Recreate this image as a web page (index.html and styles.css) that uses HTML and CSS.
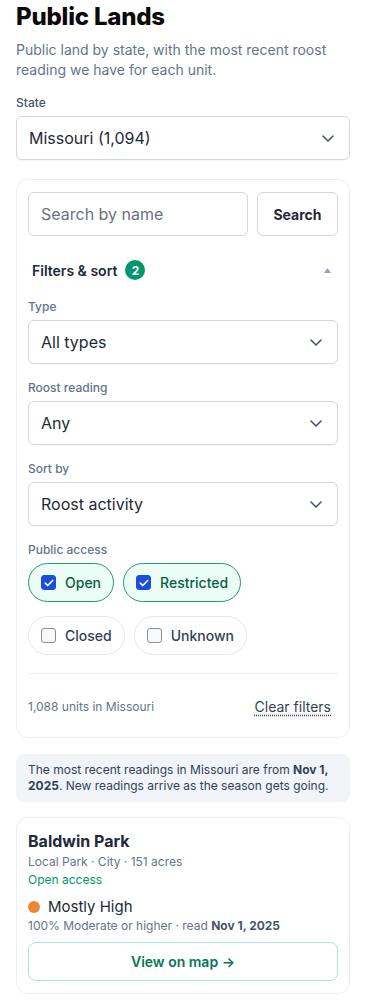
FILE: index.html
```html
<!DOCTYPE html>
<html lang="en">
<head>
<meta charset="utf-8">
<title>Public Lands</title>
<link rel="stylesheet" href="styles.css">
</head>
<body>
<main class="page">
  <h1 class="title">Public Lands</h1>
  <p class="subtitle">Public land by state, with the most recent roost reading we have for each unit.</p>

  <label class="label label-state">State</label>
  <div class="select">
    <span>Missouri (1,094)</span>
    <svg class="chev" width="12" height="7" viewBox="0 0 12 7"><path d="M1 1l5 5 5-5" fill="none" stroke="#475569" stroke-width="1.6" stroke-linecap="round" stroke-linejoin="round"/></svg>
  </div>

  <section class="filters">
    <div class="search-row">
      <div class="search-input">Search by name</div>
      <button class="search-btn">Search</button>
    </div>

    <div class="fs-row">
      <span class="fs-title">Filters &amp; sort</span>
      <span class="badge">2</span>
      <svg class="caret" width="7" height="5" viewBox="0 0 7 5"><path d="M3.5 0L7 5H0z" fill="#94a3b8"/></svg>
    </div>

    <label class="label">Type</label>
    <div class="select">
      <span>All types</span>
      <svg class="chev" width="12" height="7" viewBox="0 0 12 7"><path d="M1 1l5 5 5-5" fill="none" stroke="#475569" stroke-width="1.6" stroke-linecap="round" stroke-linejoin="round"/></svg>
    </div>

    <label class="label">Roost reading</label>
    <div class="select">
      <span>Any</span>
      <svg class="chev" width="12" height="7" viewBox="0 0 12 7"><path d="M1 1l5 5 5-5" fill="none" stroke="#475569" stroke-width="1.6" stroke-linecap="round" stroke-linejoin="round"/></svg>
    </div>

    <label class="label">Sort by</label>
    <div class="select">
      <span>Roost activity</span>
      <svg class="chev" width="12" height="7" viewBox="0 0 12 7"><path d="M1 1l5 5 5-5" fill="none" stroke="#475569" stroke-width="1.6" stroke-linecap="round" stroke-linejoin="round"/></svg>
    </div>

    <label class="label">Public access</label>
    <div class="chips">
      <span class="chip on"><span class="box"><svg width="10" height="8" viewBox="0 0 10 8"><path d="M1.3 4.2l2.4 2.3L8.7 1.5" fill="none" stroke="#fff" stroke-width="1.7" stroke-linecap="round" stroke-linejoin="round"/></svg></span>Open</span>
      <span class="chip on"><span class="box"><svg width="10" height="8" viewBox="0 0 10 8"><path d="M1.3 4.2l2.4 2.3L8.7 1.5" fill="none" stroke="#fff" stroke-width="1.7" stroke-linecap="round" stroke-linejoin="round"/></svg></span>Restricted</span>
      <span class="chip"><span class="box"></span>Closed</span>
      <span class="chip"><span class="box"></span>Unknown</span>
    </div>

    <div class="foot">
      <span class="count">1,088 units in Missouri</span>
      <a class="clear">Clear filters</a>
    </div>
  </section>

  <div class="notice">The most recent readings in Missouri are from <b>Nov 1, 2025</b>. New readings arrive as the season gets going.</div>

  <article class="card">
    <h2 class="card-title">Baldwin Park</h2>
    <div class="meta">Local Park · City · 151 acres</div>
    <div class="access">Open access</div>
    <div class="level"><span class="dot"></span>Mostly High</div>
    <div class="reading">100% Moderate or higher · read <b>Nov 1, 2025</b></div>
    <button class="map-btn">View on map →</button>
  </article>
</main>
</body>
</html>
```

FILE: styles.css
```css
* { box-sizing: border-box; }
html, body { margin: 0; padding: 0; background: #fff; }
body {
  font-family: Inter, "Noto Sans", "Liberation Sans", sans-serif;
  color: #1e293b;
}
.page { padding: 2px 16px 0; }

.title {
  margin: 0;
  font-size: 24px;
  line-height: 29px;
  font-weight: 800;
  color: #0a0a0a;
  letter-spacing: -0.2px;
}
.subtitle {
  margin: 9px 0 0;
  font-size: 14px;
  line-height: 20px;
  color: #64748b;
}
.label {
  display: block;
  font-size: 12px;
  line-height: 16px;
  color: #64748b;
  font-weight: 500;
  margin: 16px 0 5px;
}
.label-state { margin-top: 15px; color: #475569; }

.select {
  height: 44px;
  border: 1px solid #d4d7dd;
  border-radius: 6px;
  background: #fff;
  display: flex;
  align-items: center;
  justify-content: space-between;
  padding: 0 15px 0 12px;
  font-size: 16px;
  color: #1f2937;
  box-shadow: 0 1px 1px rgba(0,0,0,0.03);
}

.filters {
  margin-top: 19px;
  border: 1px solid #eceef1;
  border-radius: 12px;
  padding: 12px 11px 12px 11px;
}
.search-row { display: flex; gap: 9px; }
.search-input {
  flex: 1;
  height: 44px;
  border: 1px solid #d4d7dd;
  border-radius: 6px;
  display: flex;
  align-items: center;
  padding-left: 12px;
  font-size: 16px;
  color: #6b7280;
}
.search-btn {
  width: 81px;
  height: 44px;
  border: 1px solid #d4d7dd;
  border-radius: 6px;
  background: #fff;
  font-family: inherit;
  font-size: 14px;
  font-weight: 700;
  color: #1f2937;
  padding: 0;
}

.fs-row {
  display: flex;
  align-items: center;
  height: 36px;
  margin-top: 16px;
  padding: 0 4px;
}
.fs-title { font-size: 14px; font-weight: 600; color: #1e293b; }
.badge {
  margin-left: 8px;
  width: 20px;
  height: 20px;
  border-radius: 50%;
  background: #059669;
  color: #fff;
  font-size: 12px;
  font-weight: 700;
  display: flex;
  align-items: center;
  justify-content: center;
}
.caret { margin-left: auto; margin-right: 3px; }
.fs-row + .label { margin-top: 11px; }

.chips { display: flex; flex-wrap: wrap; gap: 14px 9px; }
.chip {
  height: 39px;
  border: 1px solid #e5e7eb;
  border-radius: 20px;
  display: flex;
  align-items: center;
  gap: 9px;
  padding: 0 12px;
  font-size: 14px;
  font-weight: 500;
  color: #334155;
  background: #fff;
}
.chip.on {
  background: #ecfdf5;
  border-color: #1f9e72;
  color: #065f46;
}
.box {
  width: 15px;
  height: 15px;
  border-radius: 3px;
  border: 1px solid #8b8f96;
  background: #f8f9fa;
  display: flex;
  align-items: center;
  justify-content: center;
}
.chip.on .box { background: #1d4ed8; border-color: #1d4ed8; }

.foot {
  margin-top: 18px;
  border-top: 1px solid #eceef1;
  padding: 20px 0 7px;
  height: 52px;
  display: flex;
  align-items: center;
  justify-content: space-between;
}
.count { font-size: 12px; color: #64748b; }
.clear {
  font-size: 14px;
  color: #334155;
  text-decoration: underline dotted;
  text-underline-offset: 3px;
  padding-right: 7px;
}

.notice {
  margin-top: 16px;
  background: #f1f5f9;
  border-radius: 8px;
  padding: 8px 12px 8px;
  font-size: 12px;
  line-height: 16px;
  color: #334155;
}
.notice b { font-weight: 700; color: #334155; }

.card {
  margin-top: 15px;
  border: 1px solid #eceef1;
  border-radius: 12px;
  padding: 12px 11px;
}
.card-title {
  margin: 0;
  font-size: 16px;
  line-height: 22px;
  font-weight: 700;
  color: #1e293b;
}
.meta { font-size: 12px; line-height: 18px; color: #64748b; margin-top: 1px; }
.access { font-size: 12px; line-height: 18px; color: #059669; }
.level {
  display: flex;
  align-items: center;
  gap: 8px;
  margin-top: 8px;
  font-size: 15px;
  line-height: 20px;
  color: #1e293b;
}
.dot { width: 12px; height: 12px; border-radius: 50%; background: #e88a33; }
.reading { font-size: 12px; line-height: 18px; color: #64748b; margin-top: 0; }
.reading b { color: #475569; }
.map-btn {
  display: block;
  width: 100%;
  height: 39px;
  margin-top: 7px;
  border: 1px solid #a7e9cf;
  border-radius: 8px;
  background: #fff;
  font-family: inherit;
  font-size: 14px;
  font-weight: 600;
  color: #047857;
}
```
